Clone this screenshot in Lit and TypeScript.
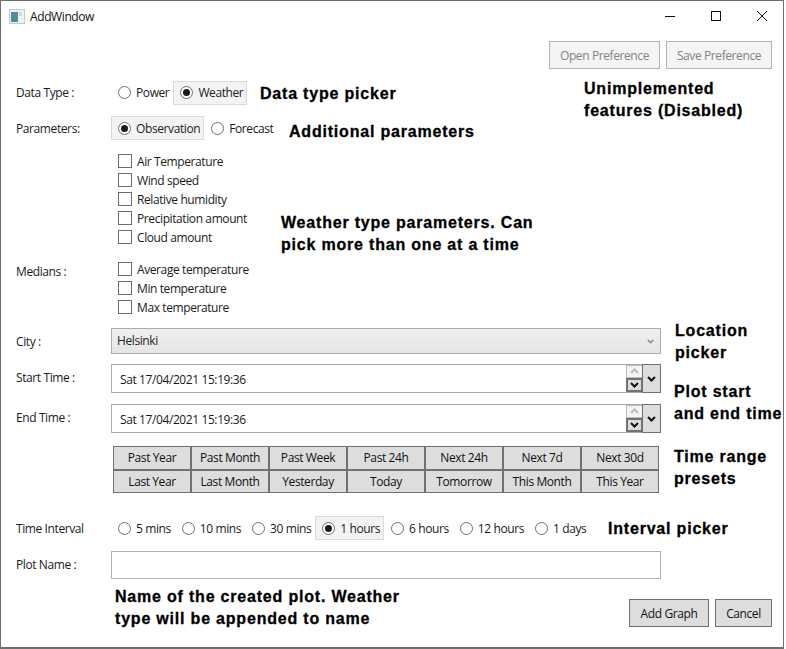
import { LitElement, css, html } from 'lit';
import { customElement } from 'lit/decorators.js';

const WEATHER = ['Air Temperature', 'Wind speed', 'Relative humidity', 'Precipitation amount', 'Cloud amount'];
const MEDIANS = ['Average temperature', 'Min temperature', 'Max temperature'];
const PRESETS = [
  'Past Year', 'Past Month', 'Past Week', 'Past 24h', 'Next 24h', 'Next 7d', 'Next 30d',
  'Last Year', 'Last Month', 'Yesterday', 'Today', 'Tomorrow', 'This Month', 'This Year',
];
const INTERVALS = ['5 mins', '10 mins', '30 mins', '1 hours', '6 hours', '12 hours', '1 days'];

const chevron = html`<svg class="chev" width="9" height="6" viewBox="0 0 9 6"><path d="M1 1l3.5 3.5L8 1" fill="none" stroke="currentColor" stroke-width="2"/></svg>`;

@customElement('app-root')
export class AppRoot extends LitElement {
  private radio(label: string, checked = false) {
    return html`<span class="radio ${checked ? 'on' : ''}"><i class="dot"></i>${label}</span>`;
  }

  private checks(items: string[]) {
    return html`<div class="checks">
      ${items.map((item) => html`<span class="check"><i class="tick"></i>${item}</span>`)}
    </div>`;
  }

  private dateField(value: string) {
    return html`<div class="date">
      <div class="date-input"><span class="date-text">${value}</span>
        <div class="spin">
          <b class="spin-up"><svg width="9" height="6" viewBox="0 0 9 6"><path d="M1 5l3.5-3.5L8 5" fill="none" stroke="currentColor" stroke-width="2"/></svg></b>
          <b class="spin-down">${chevron}</b>
        </div>
      </div>
      <b class="drop">${chevron}</b>
    </div>`;
  }

  override render() {
    return html`<div class="window">
      <header class="title">
        <svg class="app-icon" width="16" height="15" viewBox="0 0 16 15">
          <defs>
            <linearGradient id="pane" x1="0" y1="0" x2="0" y2="1">
              <stop offset="0" stop-color="#5c84a8"/>
              <stop offset="1" stop-color="#3f9a86"/>
            </linearGradient>
          </defs>
          <rect x="0.5" y="0.5" width="15" height="14" fill="#eef1f1" stroke="#c4c8c8"/>
          <rect x="2" y="3" width="7" height="10" fill="url(#pane)"/>
          <rect x="10" y="3" width="3" height="4" fill="#cfd8dc"/>
        </svg>
        <span class="title-text">AddWindow</span>
        <div class="caption">
          <svg width="12" height="12" viewBox="0 0 12 12"><path d="M1 6.5h10" stroke="#111"/></svg>
          <svg width="12" height="12" viewBox="0 0 12 12"><rect x="1.5" y="1.5" width="9" height="9" fill="none" stroke="#111"/></svg>
          <svg width="12" height="12" viewBox="0 0 12 12"><path d="M1 1l10 10M11 1L1 11" stroke="#111"/></svg>
        </div>
      </header>

      <div class="toolbar">
        <button class="btn disabled open">Open Preference</button>
        <button class="btn disabled save">Save Preference</button>
      </div>

      <div class="row row-type">
        <label>Data Type :</label>
        <div class="radios">${this.radio('Power')}${this.radio('Weather', true)}</div>
      </div>
      <div class="row row-params">
        <label>Parameters:</label>
        <div class="radios">${this.radio('Observation', true)}${this.radio('Forecast')}</div>
      </div>
      <div class="row row-weather"><label></label>${this.checks(WEATHER)}</div>
      <div class="row row-medians"><label>Medians :</label>${this.checks(MEDIANS)}</div>

      <div class="row row-city">
        <label>City :</label>
        <div class="combo"><span>Helsinki</span>${chevron}</div>
      </div>
      <div class="row row-start"><label>Start Time :</label>${this.dateField('Sat 17/04/2021 15:19:36')}</div>
      <div class="row row-end"><label>End Time :</label>${this.dateField('Sat 17/04/2021 15:19:36')}</div>

      <div class="presets">${PRESETS.map((p) => html`<button class="preset">${p}</button>`)}</div>

      <div class="row row-interval">
        <label>Time Interval</label>
        <div class="radios">${INTERVALS.map((i) => this.radio(i, i === '1 hours'))}</div>
      </div>
      <div class="row row-name">
        <label>Plot Name :</label>
        <div class="text-input"></div>
      </div>
      <div class="actions">
        <button class="btn add">Add Graph</button>
        <button class="btn cancel">Cancel</button>
      </div>

      <div class="note n-type">Data type picker</div>
      <div class="note n-unimpl">Unimplemented<br />features (Disabled)</div>
      <div class="note n-params">Additional parameters</div>
      <div class="note n-weather">Weather type parameters. Can<br />pick more than one at a time</div>
      <div class="note n-loc">Location<br />picker</div>
      <div class="note n-time">Plot start<br />and end time</div>
      <div class="note n-range">Time range<br />presets</div>
      <div class="note n-interval">Interval picker</div>
      <div class="note n-name">Name of the created plot. Weather<br />type will be appended to name</div>
    </div>`;
  }

  static override styles = css`
    :host {
      display: block;
      width: 786px;
      height: 649px;
      background: #fff;
      font: 12px 'Open Sans', 'Noto Sans', sans-serif;
      letter-spacing: -0.4px;
      color: #1a1a1a;
    }

    .window {
      position: relative;
      box-sizing: border-box;
      width: 784px;
      height: 649px;
      border: 1px solid #6e6e6e;
      border-width: 1px 1px 2px 1px;
      display: flex;
      flex-direction: column;
      background: #fff;
    }

    .title {
      height: 31px;
      display: flex;
      align-items: center;
      padding-left: 8px;
    }

    .title-text {
      margin-left: 5px;
      color: #111;
    }

    .caption {
      margin-left: auto;
      margin-right: 15px;
      margin-top: -2px;
      display: flex;
      gap: 34px;
    }

    .toolbar {
      display: flex;
      justify-content: flex-end;
      gap: 6px;
      margin-top: 9px;
      padding-right: 11px;
    }

    .btn {
      box-sizing: border-box;
      height: 28px;
      border: 1px solid #707070;
      background: #dddddd;
      color: #111;
      font: inherit;
      letter-spacing: inherit;
      padding: 0;
    }

    .btn.disabled {
      border-color: #adb2b5;
      background: #f4f4f4;
      color: #838383;
    }

    .open { width: 111px; }
    .save { width: 106px; }
    .add { width: 80px; }
    .cancel { width: 57px; }

    .row {
      display: flex;
      padding-left: 15px;
    }

    .row label {
      flex: 0 0 95px;
    }

    .row-type { margin-top: 11px; height: 25px; align-items: center; }
    .row-params { margin-top: 11px; height: 24px; align-items: center; }
    .row-weather { margin-top: 13px; }
    .row-medians { margin-top: 16px; }
    .row-medians label { padding-top: 2px; }
    .row-city { margin-top: 13px; }
    .row-city label { padding-top: 5px; }
    .row-start { margin-top: 10px; }
    .row-start label { padding-top: 5px; }
    .row-end { margin-top: 11px; }
    .row-end label { padding-top: 5px; }
    .row-interval { margin-top: 23px; height: 24px; align-items: center; }
    .row-name { margin-top: 11px; }
    .row-name label { padding-top: 5px; }

    .radios {
      display: flex;
      align-items: center;
      height: 100%;
    }

    .radio {
      box-sizing: border-box;
      height: 24px;
      display: inline-flex;
      align-items: center;
      gap: 5px;
      padding: 0 3px 0 6px;
      border: 1px solid transparent;
    }

    .radio.on {
      border-color: #dadada;
      background: #f3f3f3;
    }

    .dot {
      box-sizing: border-box;
      width: 13px;
      height: 13px;
      border: 1px solid #6e6e6e;
      border-radius: 50%;
      background: #fff;
      display: grid;
      place-items: center;
    }

    .radio.on .dot::after {
      content: '';
      width: 7px;
      height: 7px;
      border-radius: 50%;
      background: #1a1a1a;
    }

    .checks {
      display: flex;
      flex-direction: column;
      gap: 3px;
      padding-left: 7px;
    }

    .check {
      height: 16px;
      display: flex;
      align-items: center;
      gap: 5px;
    }

    .tick {
      box-sizing: border-box;
      width: 14px;
      height: 14px;
      border: 1px solid #6e6e6e;
      background: #fff;
    }

    .combo {
      box-sizing: border-box;
      width: 550px;
      height: 26px;
      border: 1px solid #acacac;
      background: linear-gradient(#f0f0f0, #e5e5e5);
      display: flex;
      align-items: center;
      justify-content: space-between;
      padding: 0 6px 2px 5px;
      color: #222;
    }

    .combo .chev {
      color: #8a8a8a;
      width: 7px;
      height: 5px;
      margin-top: 3px;
    }

    .date {
      width: 550px;
      height: 29px;
      display: flex;
    }

    .date-input {
      box-sizing: border-box;
      flex: 1;
      border: 1px solid #acacac;
      display: flex;
      align-items: center;
      justify-content: space-between;
      padding-left: 8px;
      min-width: 0;
    }

    .date-text {
      padding-top: 2px;
    }

    .spin {
      display: flex;
      flex-direction: column;
      width: 17px;
      height: 100%;
      margin-right: -1px;
    }

    .spin b, .drop {
      display: grid;
      place-items: center;
      box-sizing: border-box;
      background: #dddddd;
      color: #111;
    }

    .spin-up {
      flex: 1;
      border: 1px solid #bbb;
      background: #f4f4f4 !important;
      color: #bdbdbd !important;
    }

    .spin-down {
      flex: 1;
      border: 2px solid #707070;
    }

    .drop {
      width: 19px;
      border: 1px solid #707070;
      margin-left: -1px;
    }

    .presets {
      display: grid;
      grid-template-columns: repeat(7, 78px);
      grid-template-rows: 24px 23px;
      margin: 13px 0 0 112px;
      width: 546px;
    }

    .preset {
      box-sizing: border-box;
      border: 1px solid #707070;
      background: #dddddd;
      color: #111;
      font: inherit;
      letter-spacing: inherit;
      padding: 0 0 1px;
    }

    .text-input {
      box-sizing: border-box;
      width: 550px;
      height: 28px;
      border: 1px solid #acb0b5;
    }

    .actions {
      display: flex;
      justify-content: flex-end;
      gap: 6px;
      margin-top: 20px;
      padding-right: 11px;
    }

    .note {
      position: absolute;
      font: bold 16px/22px 'Liberation Sans', Arial, sans-serif;
      letter-spacing: 0.8px;
      -webkit-text-stroke: 0.3px #000;
      color: #000;
      white-space: nowrap;
    }

    .n-type { left: 259px; top: 82px; }
    .n-unimpl { left: 583px; top: 77px; }
    .n-params { left: 288px; top: 120px; }
    .n-weather { left: 280px; top: 211px; }
    .n-loc { left: 674px; top: 319px; }
    .n-time { left: 673px; top: 380px; }
    .n-range { left: 673px; top: 445px; }
    .n-interval { left: 607px; top: 517px; }
    .n-name { left: 114px; top: 585px; }
  `;
}
